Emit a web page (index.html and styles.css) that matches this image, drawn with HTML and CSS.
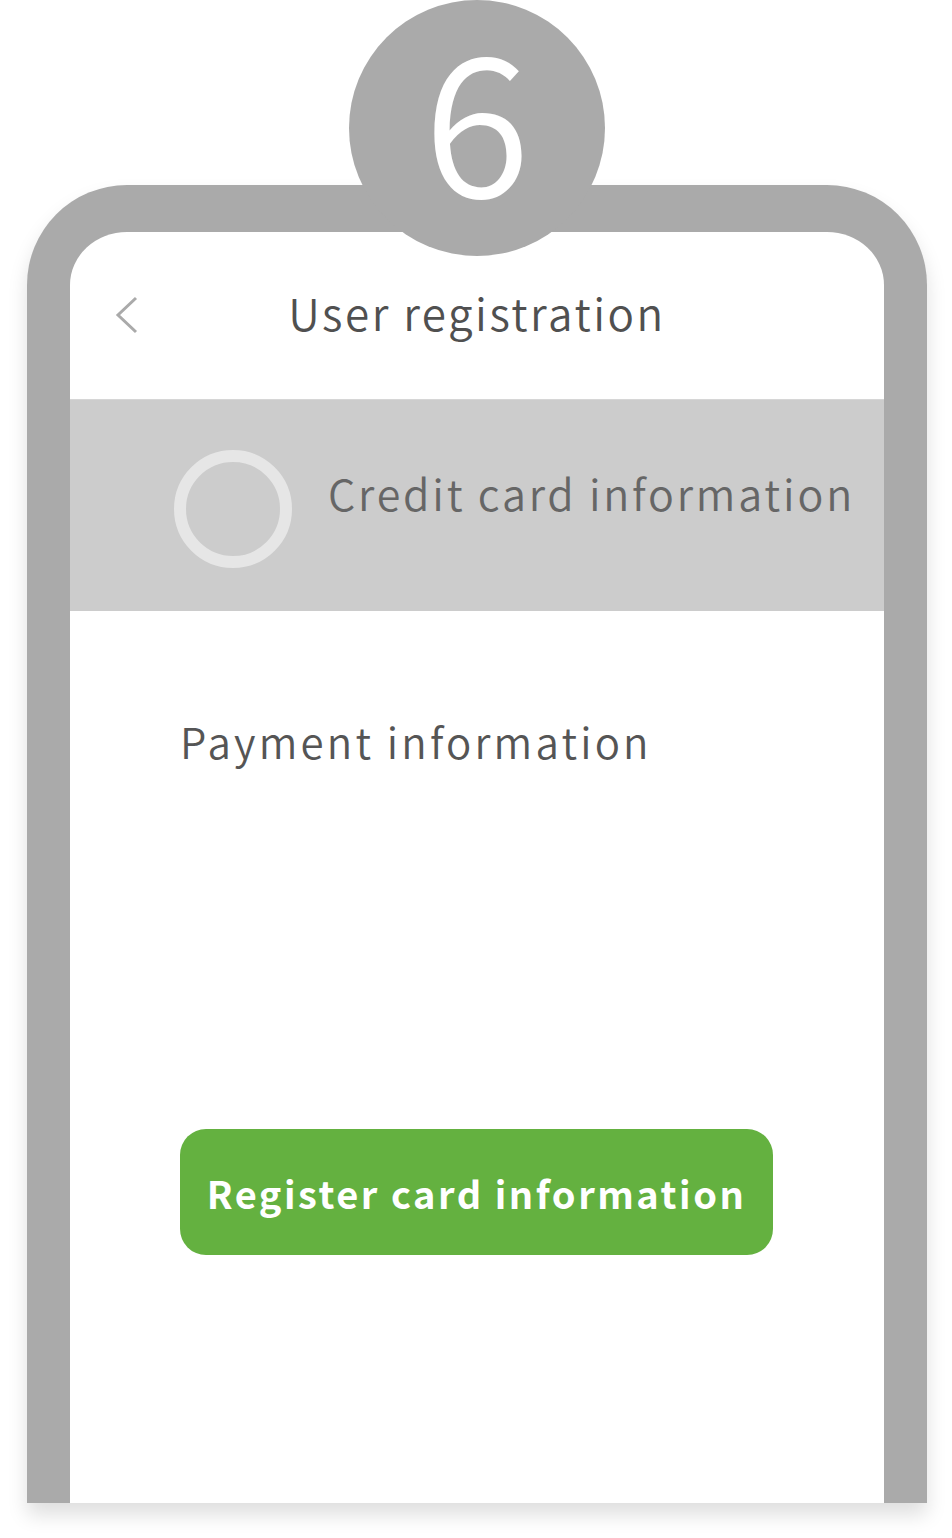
FILE: index.html
```html
<!DOCTYPE html>
<html>

<head>
    <meta charset='utf-8'>
    <title>User registration</title>
    <meta name='viewport' content='width=device-width, initial-scale=1'>
    <link rel="stylesheet" href="styles.css">
</head>

<body>
    <div class="page">
        <div class="step-badge">6</div>

        <div class="phone">
            <div class="screen">
                <div class="header">
                    <svg class="back" width="24" height="40" viewBox="0 0 24 40">
                        <polyline points="21,2 3,19 21,36" fill="none" stroke="#aaaaaa" stroke-width="3" />
                    </svg>
                    <h1 class="title">User registration</h1>
                </div>

                <div class="section-row">
                    <span class="radio"></span>
                    <span class="section-label">Credit card information</span>
                </div>

                <div class="content">
                    <p class="field-label">Payment information</p>
                    <button class="primary-btn" type="button">Register card information</button>
                </div>
            </div>
        </div>
    </div>
</body>

</html>
```

FILE: styles.css
```css
body {
    margin: 0;
    background-color: white;
    font-family: "Noto Sans CJK JP", "Noto Sans", sans-serif;
    height: 1538px;
    overflow: hidden;
}

.page {
    position: relative;
    padding: 185px 0 0 27px;
}

.step-badge {
    position: absolute;
    top: 0;
    left: 349px;
    width: 256px;
    height: 256px;
    border-radius: 50%;
    background-color: #aaaaaa;
    color: white;
    font-size: 194px;
    font-weight: 350;
    line-height: 226px;
    text-align: center;
    z-index: 2;
}

.phone {
    width: 814px;
    height: 1271px;
    border: 43px solid #aaaaaa;
    border-top-width: 47px;
    border-bottom: none;
    border-radius: 100px 100px 0 0;
    background-color: white;
    box-shadow: 0 12px 20px rgba(0, 0, 0, 0.13);
}

.screen {
    height: 100%;
    border-radius: 57px 53px 0 0;
    overflow: hidden;
}

.header {
    position: relative;
    height: 167px;
    display: flex;
    align-items: center;
    justify-content: center;
}

.back {
    position: absolute;
    left: 45px;
    top: 64px;
}

.title {
    margin: 0;
    padding-bottom: 8px;
    font-size: 44px;
    font-weight: 350;
    letter-spacing: 2.5px;
    color: #505050;
}

.section-row {
    height: 212px;
    background-color: #cccccc;
    border-top: 1px solid #d6d6d6;
    box-sizing: border-box;
    display: flex;
    align-items: center;
    padding-left: 104px;
    gap: 36px;
}

.radio {
    flex: none;
    width: 94px;
    height: 94px;
    margin-top: 6px;
    border: 12px solid #e6e6e6;
    border-radius: 50%;
}

.section-label {
    padding-bottom: 28px;
    font-size: 43px;
    font-weight: 350;
    letter-spacing: 2.8px;
    color: #666666;
    white-space: nowrap;
}

.content {
    padding: 0 110px;
}

.field-label {
    margin: 99px 0 0 0;
    font-size: 42px;
    font-weight: 350;
    letter-spacing: 3.2px;
    color: #555555;
}

.primary-btn {
    display: block;
    margin-top: 358px;
    width: 593px;
    height: 126px;
    border: none;
    border-radius: 26px;
    background-color: #64b140;
    color: white;
    font-family: inherit;
    font-size: 38px;
    font-weight: bold;
    letter-spacing: 2.5px;
}
```
